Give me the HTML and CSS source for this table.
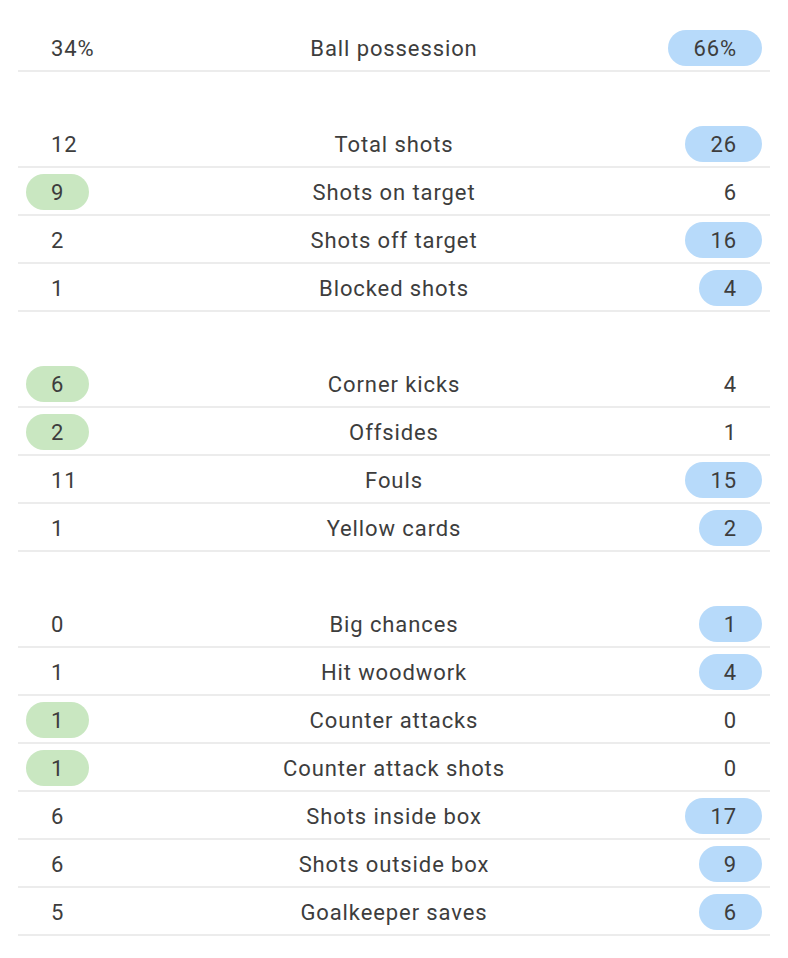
FILE: index.html
```html
<!DOCTYPE html>
<html>
<head>
<meta charset="utf-8">
<link rel="stylesheet" href="styles.css">
</head>
<body>
<div class="stats">
  <div class="group">
    <div class="row"><span class="val">34%</span><span class="label">Ball possession</span><span class="val away hl">66%</span></div>
  </div>
  <div class="group">
    <div class="row"><span class="val">12</span><span class="label">Total shots</span><span class="val away hl">26</span></div>
    <div class="row"><span class="val home hl">9</span><span class="label">Shots on target</span><span class="val">6</span></div>
    <div class="row"><span class="val">2</span><span class="label">Shots off target</span><span class="val away hl">16</span></div>
    <div class="row"><span class="val">1</span><span class="label">Blocked shots</span><span class="val away hl">4</span></div>
  </div>
  <div class="group">
    <div class="row"><span class="val home hl">6</span><span class="label">Corner kicks</span><span class="val">4</span></div>
    <div class="row"><span class="val home hl">2</span><span class="label">Offsides</span><span class="val">1</span></div>
    <div class="row"><span class="val">11</span><span class="label">Fouls</span><span class="val away hl">15</span></div>
    <div class="row"><span class="val">1</span><span class="label">Yellow cards</span><span class="val away hl">2</span></div>
  </div>
  <div class="group">
    <div class="row"><span class="val">0</span><span class="label">Big chances</span><span class="val away hl">1</span></div>
    <div class="row"><span class="val">1</span><span class="label">Hit woodwork</span><span class="val away hl">4</span></div>
    <div class="row"><span class="val home hl">1</span><span class="label">Counter attacks</span><span class="val">0</span></div>
    <div class="row"><span class="val home hl">1</span><span class="label">Counter attack shots</span><span class="val">0</span></div>
    <div class="row"><span class="val">6</span><span class="label">Shots inside box</span><span class="val away hl">17</span></div>
    <div class="row"><span class="val">6</span><span class="label">Shots outside box</span><span class="val away hl">9</span></div>
    <div class="row"><span class="val">5</span><span class="label">Goalkeeper saves</span><span class="val away hl">6</span></div>
  </div>
</div>
</body>
</html>
```

FILE: styles.css
```css
html, body {
  margin: 0;
  padding: 0;
  background: #ffffff;
}

body {
  font-family: Roboto, "Liberation Sans", sans-serif;
  font-size: 22px;
  letter-spacing: 0.9px;
  color: #3d3d3d;
}

.stats {
  margin: 0 18px;
  padding-top: 24px;
  display: flex;
  flex-direction: column;
  gap: 48px;
}

.row {
  box-sizing: border-box;
  height: 48px;
  padding: 2px 8px 0;
  border-bottom: 2px solid #ececec;
  display: grid;
  grid-template-columns: 1fr auto 1fr;
  align-items: center;
}

.label {
  text-align: center;
  white-space: nowrap;
}

.val {
  box-sizing: border-box;
  height: 36px;
  min-width: 62px;
  padding: 0 25px;
  border-radius: 18px;
  display: inline-flex;
  align-items: center;
  justify-content: center;
  justify-self: start;
}

.row .val:last-child {
  justify-self: end;
}

.home.hl {
  background: #c9e7c1;
}

.away.hl {
  background: #b7dafa;
}
```
